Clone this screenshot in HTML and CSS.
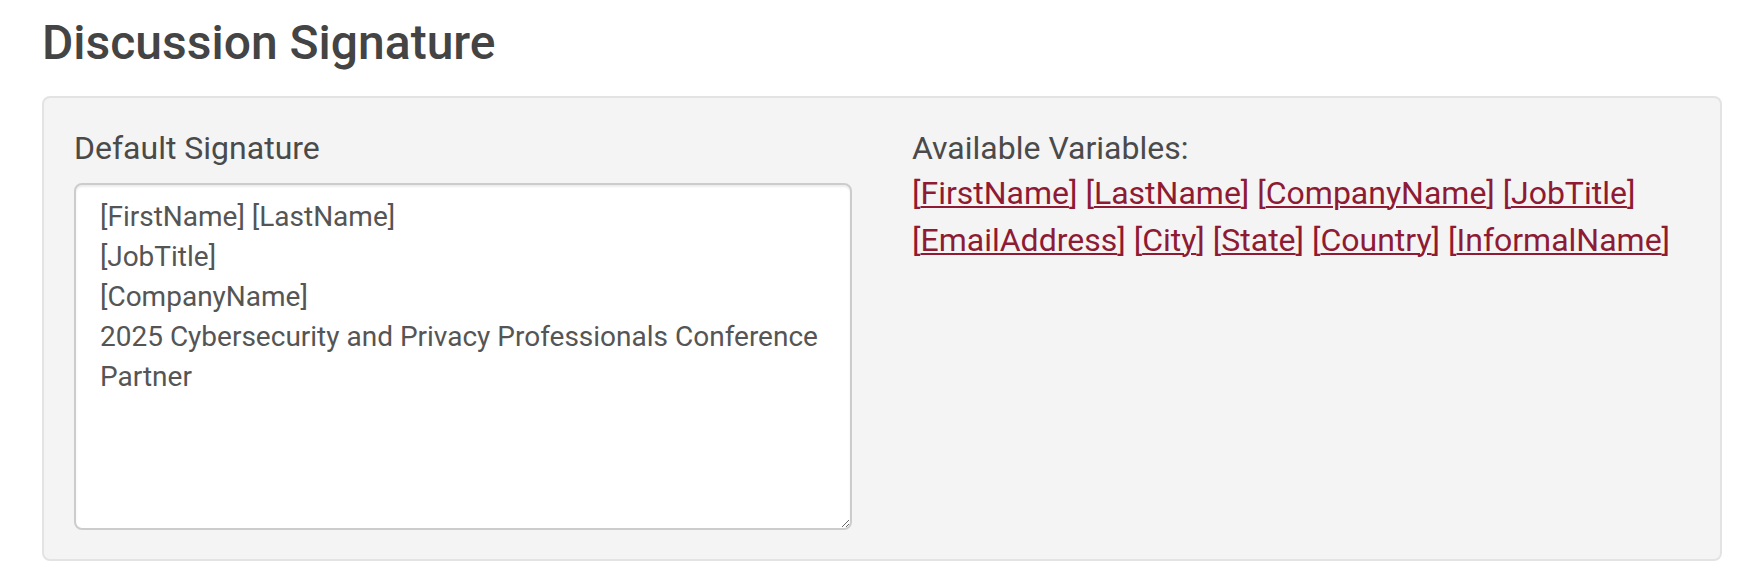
FILE: index.html
```html
<!DOCTYPE html>
<html lang="en">
<head>
<meta charset="utf-8">
<title>Discussion Signature</title>
<link rel="stylesheet" href="styles.css">
</head>
<body>
<div class="page">
  <h1 class="title">Discussion Signature</h1>
  <div class="well">
    <div class="col">
      <label class="field-label" for="sig">Default Signature</label>
      <textarea id="sig" class="sig-input" readonly>[FirstName] [LastName]
[JobTitle]
[CompanyName]
2025 Cybersecurity and Privacy Professionals Conference Partner</textarea>
    </div>
    <div class="col">
      <div class="field-label">Available Variables:</div>
      <div class="vars">
        <a class="var" href="#">[<span class="u">FirstName</span>]</a>
        <a class="var" href="#">[<span class="u">LastName</span>]</a>
        <a class="var" href="#">[<span class="u">CompanyName</span>]</a>
        <a class="var" href="#">[<span class="u">JobTitle</span>]</a>
        <a class="var" href="#">[<span class="u">EmailAddress</span>]</a>
        <a class="var" href="#">[<span class="u">City</span>]</a>
        <a class="var" href="#">[<span class="u">State</span>]</a>
        <a class="var" href="#">[<span class="u">Country</span>]</a>
        <a class="var" href="#">[<span class="u">InformalName</span>]</a>
      </div>
    </div>
  </div>
</div>
</body>
</html>
```

FILE: styles.css
```css
html, body {
  margin: 0;
  padding: 0;
  background: #ffffff;
}

body {
  font-family: Roboto, "Liberation Sans", Arial, sans-serif;
  color: #4a4a4a;
}

.page {
  padding: 17px 26px 0 42px;
}

.title {
  margin: 0 0 26px 0;
  font-size: 48px;
  line-height: 52.8px;
  font-weight: 500;
  color: #444444;
}

.well {
  display: grid;
  grid-template-columns: 1fr 1fr;
  column-gap: 60px;
  padding: 28px 30px 29px 30px;
  background: #f4f4f4;
  border: 2px solid #e3e3e3;
  border-radius: 8px;
}

.col {
  display: flex;
  flex-direction: column;
  min-width: 0;
}

.field-label {
  font-size: 32px;
  line-height: 45.7px;
  font-weight: 400;
  color: #4a4a4a;
  margin-bottom: 11px;
}

.col .field-label + .vars {
  margin-top: -13px;
}

.sig-input {
  box-sizing: border-box;
  width: 100%;
  height: 347px;
  padding: 12px 24px;
  font-family: Roboto, "Liberation Sans", Arial, sans-serif;
  font-size: 28px;
  line-height: 40px;
  color: #555555;
  background: #ffffff;
  border: 2px solid #cccccc;
  border-radius: 8px;
  box-shadow: inset 0 2px 2px rgba(0, 0, 0, 0.075);
  resize: vertical;
  outline: none;
}

.vars {
  font-size: 32px;
  line-height: 47px;
}

.var {
  color: #8e1b33;
  text-decoration: none;
}

.var .u {
  text-decoration: underline;
  text-decoration-thickness: 2px;
  text-underline-offset: 2px;
}
```
